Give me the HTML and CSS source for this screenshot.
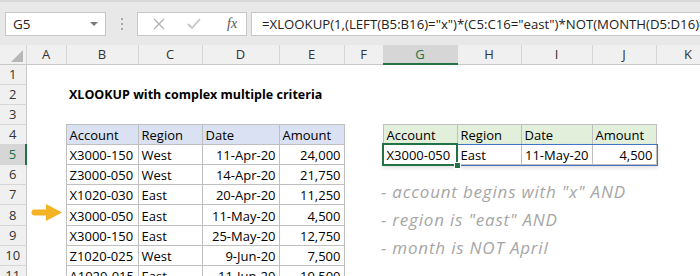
FILE: index.html
```html
<!DOCTYPE html>
<html lang="en">
<head>
    <meta charset="UTF-8">
    <title>XLOOKUP with complex multiple criteria</title>
    <link rel="stylesheet" href="styles.css">
</head>
<body>
    <div class="toolbar">
        <div class="namebox"><span>G5</span><i class="caret"></i></div>
        <svg class="grip" width="4" height="12" viewBox="0 0 4 12">
            <rect x="1" y="0" width="2" height="2" fill="#a9a9a9"/>
            <rect x="1" y="5" width="2" height="2" fill="#a9a9a9"/>
            <rect x="1" y="10" width="2" height="2" fill="#a9a9a9"/>
        </svg>
        <div class="fxbox">
            <svg class="ico" width="12" height="12" viewBox="0 0 12 12">
                <path d="M1 1 L11 11 M11 1 L1 11" stroke="#b3b3b3" stroke-width="1.3" fill="none"/>
            </svg>
            <svg class="ico" width="14" height="12" viewBox="0 0 14 12">
                <path d="M1 6 L5 10 L13 1" stroke="#c4c4c4" stroke-width="1.8" fill="none"/>
            </svg>
            <span class="fx">fx</span>
        </div>
        <div class="formula">=XLOOKUP(1,(LEFT(B5:B16)="x")*(C5:C16="east")*NOT(MONTH(D5:D16)=4),B5:E16)</div>
    </div>

    <div class="sheet">
        <table class="grid">
            <colgroup>
                <col class="w-rh"><col class="w-a"><col class="w-b"><col class="w-c"><col class="w-d"><col class="w-e">
                <col class="w-f"><col class="w-g"><col class="w-h"><col class="w-i"><col class="w-j"><col class="w-k">
            </colgroup>
            <tr class="colhead">
                <th class="corner">
                    <svg width="12" height="12" viewBox="0 0 12 12"><polygon points="12,0 12,12 0,12" fill="#b7b7b7"/></svg>
                </th>
                <th>A</th><th>B</th><th>C</th><th>D</th><th>E</th><th>F</th>
                <th class="active">G</th><th>H</th><th>I</th><th>J</th><th>K</th>
            </tr>
            <tr>
                <th class="rh">1</th><td></td><td></td><td></td><td></td><td></td><td></td><td></td><td></td><td></td><td></td><td></td>
            </tr>
            <tr>
                <th class="rh">2</th><td></td><td class="title">XLOOKUP with complex multiple criteria</td><td></td><td></td><td></td><td></td><td></td><td></td><td></td><td></td><td></td>
            </tr>
            <tr>
                <th class="rh">3</th><td></td><td></td><td></td><td></td><td></td><td></td><td></td><td></td><td></td><td></td><td></td>
            </tr>
            <tr>
                <th class="rh">4</th><td></td>
                <td class="c hd-blue">Account</td><td class="c hd-blue">Region</td><td class="c hd-blue">Date</td><td class="c hd-blue">Amount</td>
                <td></td>
                <td class="c hd-green">Account</td><td class="c hd-green">Region</td><td class="c hd-green">Date</td><td class="c hd-green">Amount</td>
                <td></td>
            </tr>
            <tr>
                <th class="rh active">5</th><td></td>
                <td class="c">X3000-150</td><td class="c">West</td><td class="c num">11-Apr-20</td><td class="c num">24,000</td>
                <td></td>
                <td class="c cur">X3000-050<span class="spill"></span><span class="sel"><i class="handle"></i></span></td>
                <td class="c">East</td><td class="c num">11-May-20</td><td class="c num">4,500</td>
                <td></td>
            </tr>
            <tr>
                <th class="rh">6</th><td></td>
                <td class="c">Z3000-050</td><td class="c">West</td><td class="c num">14-Apr-20</td><td class="c num">21,750</td>
                <td></td><td></td><td></td><td></td><td></td><td></td>
            </tr>
            <tr>
                <th class="rh">7</th><td></td>
                <td class="c">X1020-030</td><td class="c">East</td><td class="c num">20-Apr-20</td><td class="c num">11,250</td>
                <td></td><td></td><td></td><td></td><td></td><td></td>
            </tr>
            <tr>
                <th class="rh">8</th>
                <td class="pointer">
                    <svg width="31" height="17" viewBox="0 0 31 17">
                        <path d="M3.5 5.5 H17 V11.5 H3.5 A3 3 0 0 1 3.5 5.5 Z" fill="#f4b324"/>
                        <polygon points="15,0 31,8.5 15,17" fill="#f4b324"/>
                    </svg>
                </td>
                <td class="c">X3000-050</td><td class="c">East</td><td class="c num">11-May-20</td><td class="c num">4,500</td>
                <td></td><td></td><td></td><td></td><td></td><td></td>
            </tr>
            <tr>
                <th class="rh">9</th><td></td>
                <td class="c">X3000-150</td><td class="c">East</td><td class="c num">25-May-20</td><td class="c num">12,750</td>
                <td></td><td></td><td></td><td></td><td></td><td></td>
            </tr>
            <tr>
                <th class="rh">10</th><td></td>
                <td class="c">Z1020-025</td><td class="c">West</td><td class="c num">9-Jun-20</td><td class="c num">7,500</td>
                <td></td><td></td><td></td><td></td><td></td><td></td>
            </tr>
            <tr>
                <th class="rh">11</th><td></td>
                <td class="c">A1020-015</td><td class="c">East</td><td class="c num">11-Jun-20</td><td class="c num">19,500</td>
                <td></td><td></td><td></td><td></td><td></td><td></td>
            </tr>
        </table>

        <div class="note">
            <p>- account begins with "x" AND</p>
            <p>- region is "east" AND</p>
            <p>- month is NOT April</p>
        </div>
    </div>
</body>
</html>
```

FILE: styles.css
```css
body {
    margin: 0;
    width: 700px;
    height: 276px;
    overflow: hidden;
    background-color: #ffffff;
    font-family: "Open Sans", "Liberation Sans", sans-serif;
    color: #000000;
}

/* formula bar */
.toolbar {
    display: flex;
    align-items: flex-start;
    height: 45px;
    box-sizing: border-box;
    padding-top: 10px;
    padding-left: 5px;
    background-color: #e8e8e8;
    border-top: 2px solid #d9d9d9;
}
.namebox {
    display: flex;
    align-items: center;
    justify-content: space-between;
    width: 101px;
    height: 24px;
    box-sizing: border-box;
    padding: 0 7px 0 7px;
    background-color: #ffffff;
    border: 1px solid #c6c6c6;
    font-size: 13.5px;
    color: #222;
}
.caret {
    width: 0;
    height: 0;
    border-left: 4px solid transparent;
    border-right: 4px solid transparent;
    border-top: 4px solid #7a7a7a;
}
.grip {
    margin: 6px 13px 0 14px;
}
.fxbox {
    display: flex;
    align-items: center;
    width: 110px;
    height: 24px;
    box-sizing: border-box;
    padding-left: 15px;
    background-color: #ffffff;
    border: 1px solid #c6c6c6;
}
.fxbox .ico {
    margin-right: 22px;
}
.fx {
    margin-left: 4px;
    font-family: "Liberation Serif", serif;
    font-style: italic;
    font-size: 14px;
    color: #555;
}
.formula {
    flex: 1;
    height: 24px;
    box-sizing: border-box;
    margin-left: 4px;
    padding-left: 10px;
    background-color: #ffffff;
    border: 1px solid #c6c6c6;
    border-right: none;
    font-size: 13.2px;
    line-height: 22px;
    white-space: nowrap;
    overflow: hidden;
    color: #222;
}

/* grid */
.sheet {
    position: relative;
}
.grid {
    border-collapse: collapse;
    table-layout: fixed;
    width: 720px;
    font-size: 13px;
}
.w-rh { width: 26px; }
.w-a { width: 40px; }
.w-b { width: 72px; }
.w-c { width: 64px; }
.w-d { width: 77px; }
.w-e { width: 65px; }
.w-f { width: 39px; }
.w-g { width: 74px; }
.w-h { width: 64px; }
.w-i { width: 71px; }
.w-j { width: 64px; }
.w-k { width: 64px; }

.grid tr {
    height: 20px;
}
.grid tr.colhead {
    height: 19px;
}
.grid td {
    padding: 0 3px 0 3px;
    white-space: nowrap;
    vertical-align: bottom;
    line-height: 18px;
}
.colhead th {
    background-color: #f0f0f0;
    border-right: 1px solid #d6d6d6;
    border-bottom: 1px solid #c8c8c8;
    font-weight: normal;
    font-size: 13px;
    color: #333;
    padding: 0;
}
.colhead th.corner {
    text-align: right;
    vertical-align: bottom;
    padding: 0 3px 2px 0;
    line-height: 0;
}
.colhead th.active {
    background-color: #d6d6d6;
    color: #217346;
    border-bottom: 2px solid #217346;
}
th.rh {
    background-color: #f0f0f0;
    border-right: 1px solid #c8c8c8;
    border-bottom: 1px solid #d6d6d6;
    font-weight: normal;
    font-size: 13px;
    color: #333;
    padding: 0;
}
th.rh.active {
    background-color: #d6d6d6;
    color: #217346;
    border-right: 2px solid #217346;
}

.title {
    font-weight: bold;
    font-size: 12.5px;
}
.c {
    border: 1px solid #bfbfbf;
}
.num {
    text-align: right;
}
.hd-blue {
    background-color: #d9e1f2;
}
.hd-green {
    background-color: #e2efda;
}
.pointer {
    text-align: center;
    line-height: 0;
    vertical-align: middle;
}

/* active cell and spill range */
.cur {
    position: relative;
}
.spill {
    position: absolute;
    left: -1px;
    top: -1px;
    width: 273px;
    height: 20px;
    border: 1px solid #4472c4;
    box-shadow: 0 2px 4px rgba(0, 0, 0, 0.12);
}
.sel {
    position: absolute;
    left: -2px;
    top: -2px;
    width: 72px;
    height: 19px;
    border: 2px solid #217346;
}
.handle {
    position: absolute;
    right: -5px;
    bottom: -5px;
    width: 5px;
    height: 5px;
    background-color: #217346;
    border: 1px solid #ffffff;
}

/* text box */
.note {
    position: absolute;
    left: 381px;
    top: 133px;
    font-family: "Open Sans", sans-serif;
    font-style: italic;
    font-size: 17px;
    letter-spacing: 0.8px;
    color: #a6a6a6;
}
.note p {
    margin: 0;
    line-height: 28px;
}
```
